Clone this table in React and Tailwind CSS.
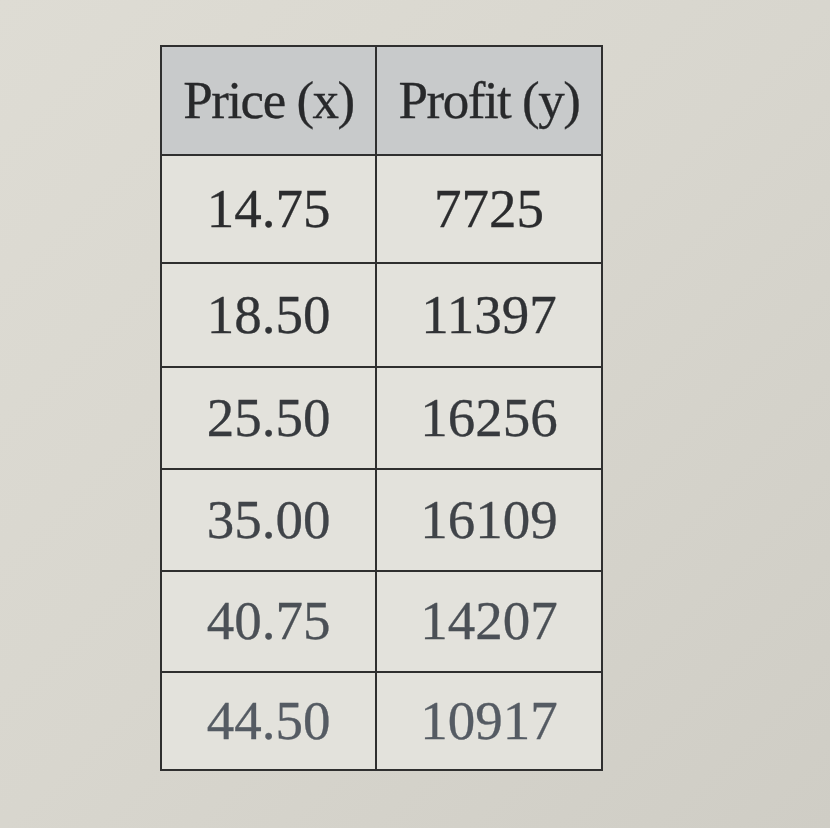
export default function App() {
  const rows = [
    ["14.75", "7725", 108, "text-[#2b2c2e]"],
    ["18.50", "11397", 104, "text-[#303235]"],
    ["25.50", "16256", 102, "text-[#373a3e]"],
    ["35.00", "16109", 102, "text-[#404449]"],
    ["40.75", "14207", 101, "text-[#4b5056]"],
    ["44.50", "10917", 98, "text-[#555b63]"],
  ];
  return (
    <div className="w-[830px] h-[828px] bg-gradient-to-br from-[#dedcd4] via-[#d8d6ce] to-[#cfcdc5] pt-[45px] pl-[160px]" style={{ fontFamily: '"Liberation Serif", "DejaVu Serif", serif' }}>
      <table className="border-collapse border-2 border-[#2f2f2f] w-[443px] [-webkit-text-stroke:0.3px_currentColor]">
        <thead>
          <tr className="h-[109px] bg-[#c8cacb] text-[#28292b]">
            <th className="w-[215px] border-2 border-[#2f2f2f] font-normal text-[53px] tracking-[-1.5px] text-center">Price (x)</th>
            <th className="border-2 border-[#2f2f2f] font-normal text-[53px] tracking-[-1.5px] text-center">Profit (y)</th>
          </tr>
        </thead>
        <tbody>
          {rows.map(([a, b, h, c]) => (
            <tr key={a} className={`bg-[#e3e2dc] ${c}`} style={{ height: h }}>
              <td className="border-2 border-[#2f2f2f] text-center text-[55px]">{a}</td>
              <td className="border-2 border-[#2f2f2f] text-center text-[55px]">{b}</td>
            </tr>
          ))}
        </tbody>
      </table>
    </div>
  );
}
